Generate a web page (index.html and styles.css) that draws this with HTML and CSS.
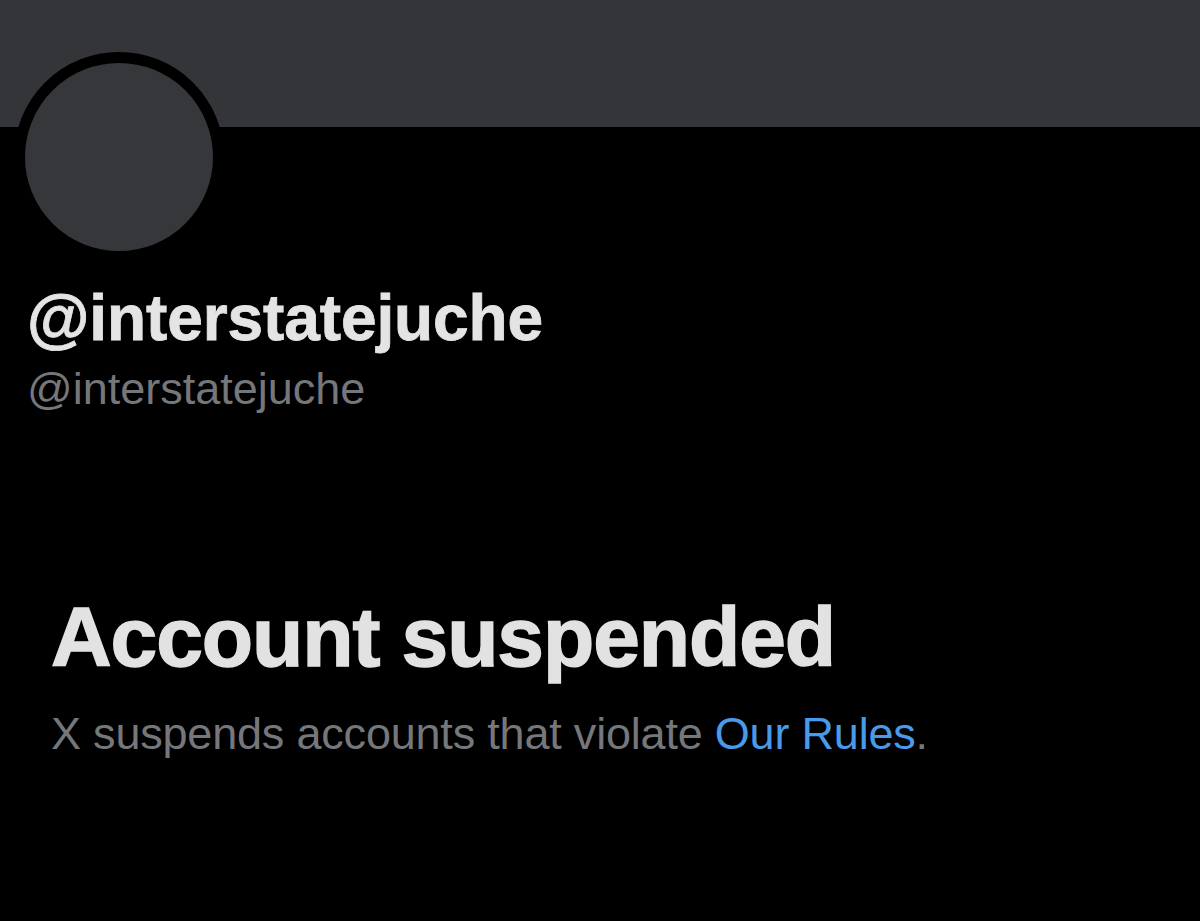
FILE: index.html
```html
<!DOCTYPE html>
<html>
<head>
<meta charset="utf-8">
<link rel="stylesheet" href="styles.css">
</head>
<body>
<div class="page">
  <div class="banner"></div>
  <div class="avatar"></div>
  <div class="names">
    <div class="display">@interstatejuche</div>
    <div class="handle">@interstatejuche</div>
  </div>
  <div class="notice">
    <div class="title">Account suspended</div>
    <div class="desc">X suspends accounts that violate <span class="link">Our Rules</span>.</div>
  </div>
</div>
</body>
</html>
```

FILE: styles.css
```css
html, body {
  margin: 0;
  padding: 0;
  background: #000;
}
.page {
  width: 1200px;
  height: 921px;
  background: #000;
  overflow: hidden;
  font-family: "Liberation Sans", Arial, sans-serif;
}
.banner {
  height: 127px;
  background: #333538;
}
.avatar {
  width: 188px;
  height: 188px;
  margin: -75px 0 0 14px;
  border: 11px solid #000;
  border-radius: 50%;
  background: #36373b;
}
.names {
  padding-left: 27px;
  margin-top: 20px;
}
.display {
  font-size: 64px;
  font-weight: 700;
  color: #e4e4e4;
  line-height: 72px;
  letter-spacing: -0.1px;
  -webkit-text-stroke: 0.8px #e4e4e4;
}
.handle {
  margin-top: 10px;
  font-size: 45px;
  font-weight: 400;
  color: #75777b;
  line-height: 50px;
}
.notice {
  padding-left: 51px;
  margin-top: 176px;
}
.title {
  font-size: 84px;
  font-weight: 700;
  color: #e2e2e2;
  line-height: 94px;
  letter-spacing: -1.1px;
  -webkit-text-stroke: 1.4px #e2e2e2;
}
.desc {
  margin-top: 25px;
  font-size: 45px;
  color: #75777b;
  line-height: 50px;
  letter-spacing: -0.2px;
}
.link {
  color: #4a9aea;
}
```
